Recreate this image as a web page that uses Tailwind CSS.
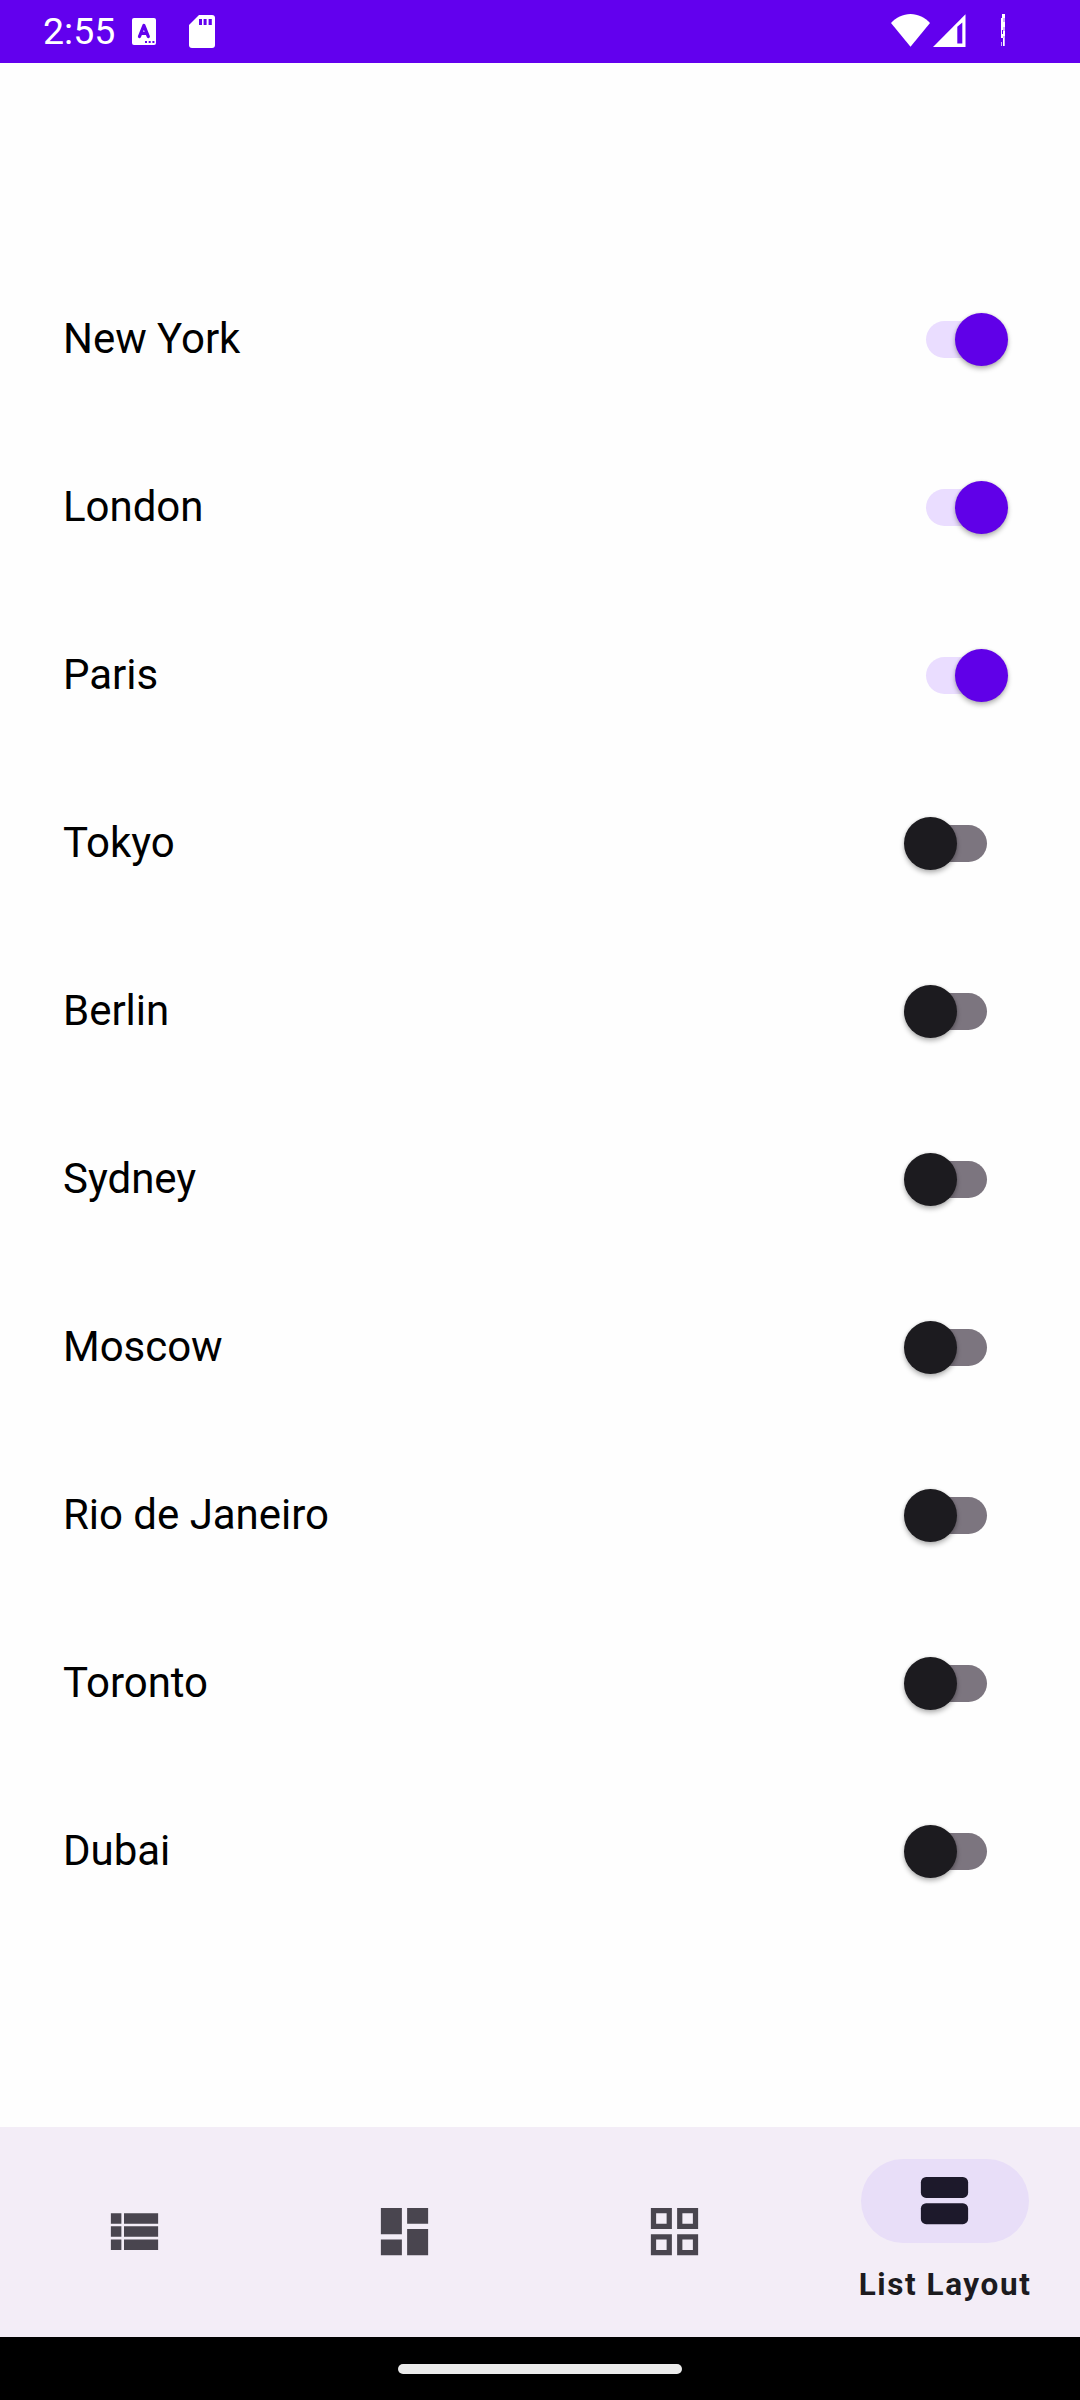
<!DOCTYPE html>
<html lang="en">
<head>
<meta charset="utf-8">
<title>List Layout</title>
<script src="https://cdn.jsdelivr.net/npm/@tailwindcss/browser@4"></script>
</head>
<body class="w-[1080px] h-[2400px] overflow-hidden bg-[#fefefe] font-[Roboto,sans-serif] flex flex-col">
<header class="h-[63px] shrink-0 bg-[#6200ee] text-white flex items-start">
  <span class="ml-[43px] w-[89px] pt-[10px] text-[37.500px] leading-[43px]">2:55</span>
  <svg class="mt-[18px] w-6 h-[27px]" viewBox="0 0 24 27"><rect width="24" height="27" rx="2" fill="#fff"/><path d="M7.500 18.500 11.900 7.500 16.300 18.500M9 15.300h5.800" fill="none" stroke="#6200ee" stroke-width="3.300" stroke-linecap="round" stroke-linejoin="round"/><path d="M13 23h2v2h-2zM16.700 23h2v2h-2zM20.400 23h2v2h-2z" fill="#6200ee"/></svg>
  <svg class="ml-[33px] mt-[15px] w-[26px] h-[33px]" viewBox="0 0 26 33"><path d="M10 0H23a3 3 0 0 1 3 3V30a3 3 0 0 1-3 3H3a3 3 0 0 1-3-3V10z" fill="#fff"/><path d="M10 4h3v6h-3zM14.600 4h3v6h-3zM19.600 4h3.200v6h-3.200z" fill="#6200ee"/></svg>
  <svg class="ml-auto mt-[14px] w-[39px] h-[33px]" viewBox="0 0 39 33"><path d="M0 9C5 3.500 12 0 19.500 0S34 3.500 39 9L19.500 32.700z" fill="#fff"/></svg>
  <svg class="ml-[3px] mt-[14px] w-[33px] h-[33px]" viewBox="0 0 33 33"><path d="M0 33 32.500 .3V33z" fill="#fff"/><path d="M24.300 12.800 29.300 8.500V29.500h-5z" fill="#6200ee"/></svg>
  <svg class="ml-[35px] mr-[75px] mt-[14px] w-1 h-8" viewBox="0 0 4 32" shape-rendering="crispEdges"><path d="M1 0h3v4H1zM0 4h2v20H0zM2 8h2v5H2zM2 17h2v5H2zM2 24h1v8H2z" fill="#fff"/><path d="M2 4h2v4H2zM2 13h2v4H2zM2 22h2v2H2zM0 28h1v4H0zM3 24h1v8H3z" fill="#d0b3fa"/><path d="M1 16h1v4H1z" fill="#6200ee"/></svg>
</header>
<main id="list" class="flex-1 pt-[192px]"></main>
<nav class="h-[210px] shrink-0 bg-[#f3edf7] grid grid-cols-4">
  <div class="flex justify-center pr-px pt-[73px]"><svg class="size-[63px]" viewBox="0 0 24 24" fill="#49454f"><path d="M3 5h4v4H3zM3 10h4v4H3zM3 15h4v4H3zM8 5h13v4H8zM8 10h13v4H8zM8 15h13v4H8z"/></svg></div>
  <div class="flex justify-center pr-px pt-[73px]"><svg class="size-[63px]" viewBox="0 0 24 24" fill="#49454f"><path d="M3 3h8v10H3zM3 15h8v6H3zM13 3h8v6h-8zM13 11h8v10h-8z"/></svg></div>
  <div class="flex justify-center pr-px pt-[73px]"><svg class="size-[63px]" viewBox="0 0 24 24" fill="#49454f" fill-rule="evenodd"><path d="M3 3h8v8H3zM5 5v4h4V5zM13 3h8v8h-8zM15 5v4h4V5zM3 13h8v8H3zM5 15v4h4v-4zM13 13h8v8h-8zM15 15v4h4v-4z"/></svg></div>
  <div class="flex flex-col items-center pt-8">
    <div class="w-[168px] h-[84px] rounded-full bg-[#e8def8] flex justify-center pt-[10px] pr-px"><svg class="size-[63px]" viewBox="0 0 24 24" fill="#1d192b"><rect x="3" y="3" width="18" height="8" rx="2"/><rect x="3" y="13" width="18" height="8" rx="2"/></svg></div>
    <span class="mt-[23px] text-[31.500px] leading-[37px] font-bold tracking-[1.575px] text-[#1c1b1f] whitespace-nowrap">List Layout</span>
  </div>
</nav>
<footer class="h-[63px] shrink-0 bg-black flex justify-center pt-[27px]"><div class="w-[284px] h-[10px] rounded-[5px] bg-[#ebebeb]"></div></footer>
<script>
const cities = [["New York",1],["London",1],["Paris",1],["Tokyo",0],["Berlin",0],["Sydney",0],["Moscow",0],["Rio de Janeiro",0],["Toronto",0],["Dubai",0]];
document.getElementById("list").innerHTML = cities.map(([name, on]) => `
  <div class="h-[168px] pl-[63px] pr-[93px] flex items-center justify-between">
    <span class="text-[42px] leading-[49px] tracking-[-0.03px] pb-0.5 text-black">${name}</span>
    <div class="relative h-[37px] rounded-full mt-px ${on ? "w-[61.500px] bg-[#eaddff]" : "w-[62px] bg-[#7c757f]"}">
      <div class="absolute -top-[7.750px] size-[52.500px] rounded-full shadow-[0_3px_5px_rgba(0,0,0,0.28),0_0_3px_rgba(0,0,0,0.12)] ${on ? "left-[29.750px] bg-[#6000e8]" : "-left-[20.750px] bg-[#1c1b1f]"}"></div>
    </div>
  </div>`).join("");
</script>
</body>
</html>
